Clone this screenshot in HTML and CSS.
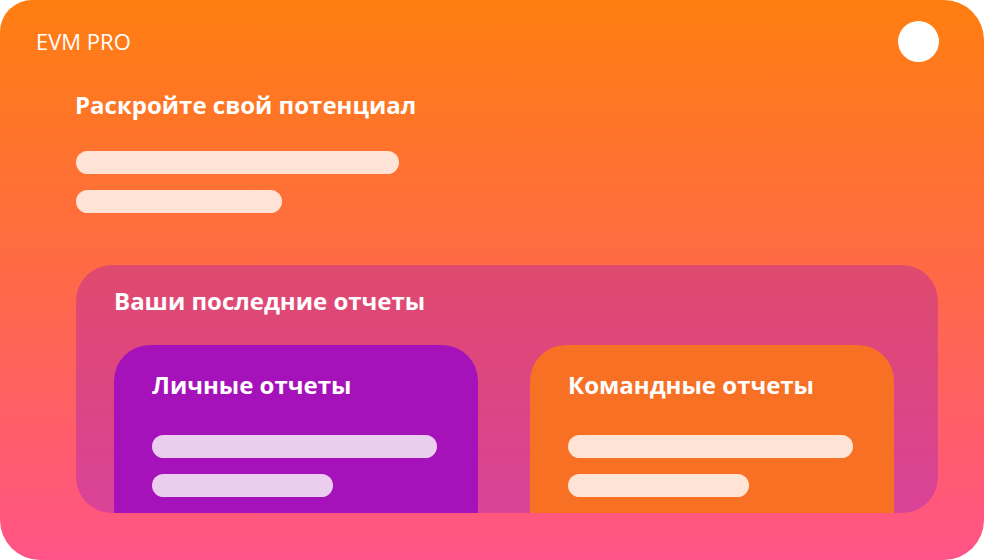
FILE: index.html
```html
<!DOCTYPE html>
<html lang="ru">
<head>
<meta charset="utf-8">
<title>EVM PRO</title>
<link rel="stylesheet" href="styles.css">
</head>
<body>
<div class="screen">
  <header class="topbar">
    <div class="brand">EVM PRO</div>
    <div class="avatar"></div>
  </header>
  <section class="hero">
    <h1 class="hero-title">Раскройте свой потенциал</h1>
    <div class="bar bar-long"></div>
    <div class="bar bar-short"></div>
  </section>
  <section class="panel">
    <h2 class="panel-title">Ваши последние отчеты</h2>
    <div class="cards">
      <div class="card card-personal">
        <h3 class="card-title">Личные отчеты</h3>
        <div class="bar card-bar-long"></div>
        <div class="bar card-bar-short"></div>
      </div>
      <div class="card card-team">
        <h3 class="card-title">Командные отчеты</h3>
        <div class="bar card-bar-long"></div>
        <div class="bar card-bar-short"></div>
      </div>
    </div>
  </section>
</div>
</body>
</html>
```

FILE: styles.css
```css
* { box-sizing: border-box; }
html, body {
  margin: 0;
  padding: 0;
  background: #ffffff;
}
body {
  font-family: "Open Sans", "Noto Sans", sans-serif;
  color: #ffffff;
}
.screen {
  width: 984px;
  height: 560px;
  border-radius: 32px 40px 40px 40px;
  overflow: hidden;
  background: linear-gradient(180deg, #FF7E10 0%, #FF6A45 48%, #FF5487 100%);
  padding: 21px 45px 0 37px;
  display: flex;
  flex-direction: column;
}
.topbar {
  display: flex;
  align-items: center;
  justify-content: space-between;
  height: 41px;
}
.brand {
  font-size: 22px;
  font-weight: 400;
  line-height: 26px;
  margin-top: -2px;
  margin-left: -1px;
}
.avatar {
  width: 41px;
  height: 41px;
  border-radius: 50%;
  background: #ffffff;
}
.hero {
  margin-left: 39px;
  display: flex;
  flex-direction: column;
  align-items: flex-start;
}
.hero-title {
  margin: 27px 0 0 -1px;
  font-size: 24px;
  font-weight: 700;
  line-height: 32px;
}
.bar {
  height: 23px;
  border-radius: 12px;
  background: #FFE3D6;
}
.bar-long { width: 323px; margin-top: 30px; }
.bar-short { width: 206px; margin-top: 16px; }
.panel {
  margin: 52px 0 0 39px;
  width: 862px;
  height: 248px;
  border-radius: 36px;
  overflow: hidden;
  background: linear-gradient(180deg, #DF4A6F 0%, #DC4585 60%, #DA4398 100%);
  padding: 20px 0 0 38px;
  display: flex;
  flex-direction: column;
}
.panel-title {
  margin: 0;
  font-size: 24px;
  font-weight: 700;
  line-height: 32px;
}
.cards {
  margin-top: 28px;
  display: flex;
  gap: 52px;
  flex: 1;
}
.card {
  width: 364px;
  border-radius: 36px 36px 0 0;
  padding: 25px 0 0 38px;
  display: flex;
  flex-direction: column;
}
.card-personal { background: #A612BA; }
.card-team { background: #F87024; }
.card-title {
  margin: 0;
  font-size: 24px;
  font-weight: 700;
  line-height: 30px;
}
.card-bar-long { width: 285px; margin-top: 35px; }
.card-bar-short { width: 181px; margin-top: 16px; }
.card-personal .bar { background: #EBCDEF; }
.card-team .bar { background: #FFE4D6; }
```
